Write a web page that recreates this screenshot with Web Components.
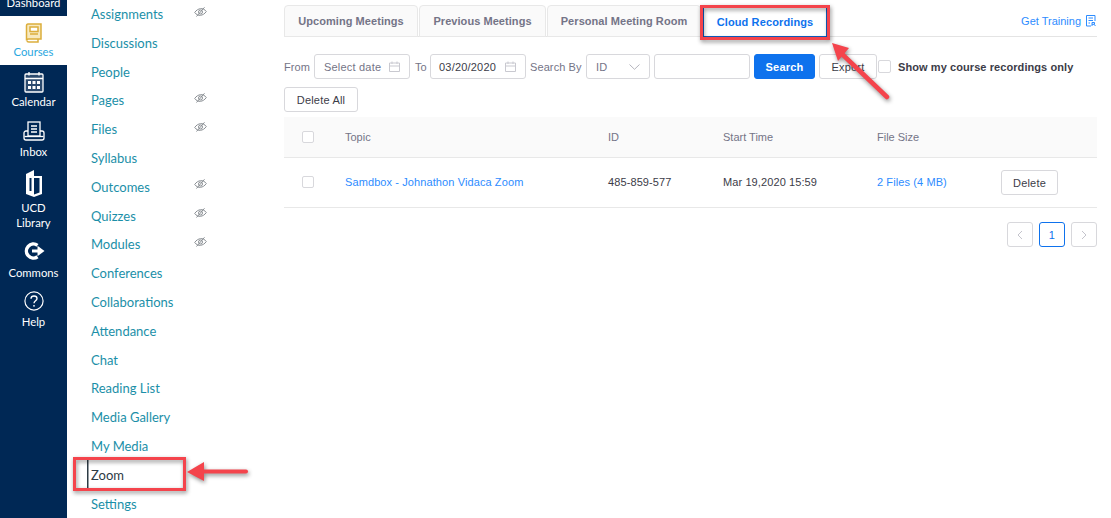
<!DOCTYPE html>
<html>
<head>
<meta charset="utf-8">
<style>
  html, body { margin: 0; height: 518px; overflow: hidden; background: #fff; }
  body { font-family: "Liberation Sans", Arial, sans-serif; }
  #page { display: grid; grid-template-columns: 67px 217px 813px; height: 518px; position: relative; overflow: hidden; }
</style>
</head>
<body>
<template id="eye">
  <svg width="13" height="12" viewBox="0 0 13 12" fill="none" stroke="#8a8f94" stroke-width="1"><path d="M.7 6.500C2.400 4 4.300 3 6.500 2.700S10.600 3.300 12.300 5.500C10.600 8 8.700 9 6.500 9.300S2.400 8.700.7 6.500Z"/><circle cx="6.500" cy="6" r="2"/><path d="M2.500 10.500 10.500 1.300"/></svg>
</template>

<div id="page">
  <rail-nav>
    <rail-item clip>Dashboard</rail-item>
    <rail-item active icon="courses" pad="7" gap="0.500" h="49">Courses</rail-item>
    <rail-item icon="calendar" pad="6" gap="0.500" h="51">Calendar</rail-item>
    <rail-item icon="inbox" pad="5" gap="2.500" h="49">Inbox</rail-item>
    <rail-item icon="library" pad="5" gap="1.500" h="71">UCD<br>Library</rail-item>
    <rail-item icon="commons" pad="5" gap="3.500" h="49">Commons</rail-item>
    <rail-item icon="help" pad="6" gap="2.500" h="49">Help</rail-item>
  </rail-nav>

  <course-nav>
    <course-link hidden-eye>Assignments</course-link>
    <course-link>Discussions</course-link>
    <course-link>People</course-link>
    <course-link hidden-eye>Pages</course-link>
    <course-link hidden-eye>Files</course-link>
    <course-link>Syllabus</course-link>
    <course-link hidden-eye>Outcomes</course-link>
    <course-link hidden-eye>Quizzes</course-link>
    <course-link hidden-eye>Modules</course-link>
    <course-link>Conferences</course-link>
    <course-link>Collaborations</course-link>
    <course-link>Attendance</course-link>
    <course-link>Chat</course-link>
    <course-link>Reading List</course-link>
    <course-link>Media Gallery</course-link>
    <course-link>My Media</course-link>
    <course-link active>Zoom</course-link>
    <course-link>Settings</course-link>
  </course-nav>

  <zoom-panel></zoom-panel>

  <callout-marks></callout-marks>
</div>

<script>
  const RAIL_ICONS = {
    courses: '<svg width="18" height="20" viewBox="0 0 18 20" fill="none" stroke="#dcae3c" stroke-width="1.500"><path d="M3 1h13v15H3.500C2 16 1.500 17 1.500 17.500V3C1.500 1.800 2 1 3 1Z" fill="#f7e9bf"/><rect x="5" y="4" width="8" height="4.500" fill="#fff"/><path d="M5 11h8"/><path d="M2 17.500c0 1 .8 1.500 1.800 1.500H13v-3"/></svg>',
    calendar: '<svg width="20" height="22" viewBox="0 0 20 22" fill="none" stroke="#fff" stroke-width="1.300"><rect x="1" y="3" width="18" height="18" rx="1" fill="#2b4a6e"/><path d="M1 7.500h18M5 1v3.500M15 1v3.500"/><g fill="#fff" stroke="none"><rect x="4" y="10" width="3" height="3"/><rect x="8.500" y="10" width="3" height="3"/><rect x="13" y="10" width="3" height="3"/><rect x="4" y="15" width="3" height="3"/><rect x="8.500" y="15" width="3" height="3"/><rect x="13" y="15" width="3" height="3"/></g></svg>',
    inbox: '<svg width="22" height="20" viewBox="0 0 22 20" fill="none" stroke="#fff" stroke-width="1.300"><rect x="5" y="1" width="12" height="14"/><path d="M8 5h6M8 8h6M8 11h6" stroke-width="1.500"/><path d="M5 10H3C1.800 10 1 11 1 12v5c0 1 .8 2 2 2h16c1.200 0 2-1 2-2v-5c0-1-.8-2-2-2h-2"/><path d="M1.500 15.500h19"/></svg>',
    library: '<svg width="18" height="28" viewBox="0 0 18 28" fill="#fff"><path d="M1 4 9 0v27L1 24Z"/><path d="M4.500 8h2v13h-2Z" fill="#002855"/><path d="M9 6h8v18l-8 3v-2.500l5.500-2V8H9Z"/></svg>',
    commons: '<svg width="22" height="20" viewBox="0 0 22 20" fill="none" stroke="#fff" stroke-width="3.500"><path d="M14.500 4.300A7 7 0 1 0 14.500 15.700"/><path d="M9 10h7" stroke-width="3"/><path d="M14.500 4.800 21.500 10 14.500 15.200Z" fill="#fff" stroke="none"/></svg>',
    help: '<svg width="20" height="20" viewBox="0 0 22 22" fill="none" stroke="#fff" stroke-width="1.300"><circle cx="11" cy="11" r="10"/><path d="M7.700 8.500C7.700 6.500 9.200 5.500 11 5.500s3.300 1 3.300 2.800c0 2.400-3.300 2.500-3.300 5.200" stroke-width="1.500"/><circle cx="11" cy="16.300" r="1" fill="#fff" stroke="none"/></svg>'
  };

  class RailNav extends HTMLElement {
    constructor() {
      super();
      this.attachShadow({ mode: 'open' }).innerHTML = `
        <style>
          :host { display: block; background: #002855; height: 518px; overflow: hidden; }
        </style>
        <slot></slot>`;
    }
  }
  customElements.define('rail-nav', RailNav);

  class RailItem extends HTMLElement {
    constructor() {
      super();
      const icon = RAIL_ICONS[this.getAttribute('icon')] || '';
      const pad = this.getAttribute('pad') || 0;
      const gap = this.getAttribute('gap') || 0;
      const h = this.getAttribute('h');
      this.attachShadow({ mode: 'open' }).innerHTML = `
        <style>
          :host {
            display: flex; flex-direction: column; align-items: center; box-sizing: border-box;
            font: 11.300px/15px Lato, sans-serif; color: #fff; text-align: center;
          }
          :host([clip]) { justify-content: flex-start; margin-top: -5px; height: 21px; }
          :host([active]) { background: #fff; color: #2aa7e0; }
          svg { display: block; flex: none; }
        </style>
        ${icon}
        <div class="lb"><slot></slot></div>`;
      if (h) this.style.height = h + 'px';
      this.style.paddingTop = pad + 'px';
      this.shadowRoot.querySelector('.lb').style.marginTop = gap + 'px';
    }
  }
  customElements.define('rail-item', RailItem);

  class CourseNav extends HTMLElement {
    constructor() {
      super();
      this.attachShadow({ mode: 'open' }).innerHTML = `
        <style>
          :host { display: block; padding-left: 20px; margin-top: -0.3px; }
        </style>
        <slot></slot>`;
    }
  }
  customElements.define('course-nav', CourseNav);

  class CourseLink extends HTMLElement {
    constructor() {
      super();
      this.attachShadow({ mode: 'open' }).innerHTML = `
        <style>
          :host {
            display: flex; align-items: center; height: 28.8px; width: 116px; padding-left: 4px;
            font: 13px Lato, sans-serif; color: #1b8fa8;
          }
          :host([active]) { color: #2d3b45; box-shadow: inset 1.500px 0 0 #2d3b45; }
          .eye { margin-left: auto; margin-top: -7px; height: 12px; }
        </style>
        <slot></slot>
        <span class="eye"></span>`;
      if (this.hasAttribute('hidden-eye')) {
        this.shadowRoot.querySelector('.eye').append(document.getElementById('eye').content.cloneNode(true));
      }
    }
  }
  customElements.define('course-link', CourseLink);

  class ZoomTab extends HTMLElement {
    constructor() {
      super();
      this.attachShadow({ mode: 'open' }).innerHTML = `
        <style>
          :host {
            display: flex; align-items: center; justify-content: center; box-sizing: border-box; height: 32px;
            background: #fafafa; border: 1px solid #e8e8e8; border-radius: 4px 4px 0 0;
            font: bold 11px "Liberation Sans", sans-serif; letter-spacing: .06px; color: #747487;
          }
          :host([active]) { background: #fff; color: #0e72ed; letter-spacing: .12px; border: 1.500px solid #0e5fc4; border-top-color: #fff; border-radius: 0; height: 31px; margin-top: 1px; }
        </style>
        <slot></slot>`;
    }
  }
  customElements.define('zoom-tab', ZoomTab);

  class ZoomBtn extends HTMLElement {
    constructor() {
      super();
      this.attachShadow({ mode: 'open' }).innerHTML = `
        <style>
          :host {
            display: inline-flex; align-items: center; justify-content: center; box-sizing: border-box; height: 25px;
            border: 1px solid #d8d8dc; border-radius: 3px; background: #fff; color: #3c3c48;
            font: 11px "Liberation Sans", sans-serif; letter-spacing: .2px;
          }
          :host([primary]) { background: #0e72ed; border-color: #0e72ed; color: #fff; font-weight: bold; }
          :host([page]) { height: 25px; width: 26px; color: #c4c4cc; }
          :host([current]) { border-color: #0e72ed; color: #0e72ed; }
        </style>
        <slot></slot>`;
    }
  }
  customElements.define('zoom-btn', ZoomBtn);

  class ZoomField extends HTMLElement {
    constructor() {
      super();
      this.attachShadow({ mode: 'open' }).innerHTML = `
        <style>
          :host {
            display: flex; align-items: center; justify-content: space-between; box-sizing: border-box; height: 25px;
            padding: 0 9px 0 8px; border: 1px solid #d8d8dc; border-radius: 3px; background: #fff; color: #3c3c48;
            font: 11px "Liberation Sans", sans-serif; letter-spacing: .2px;
          }
          :host([muted]) { color: #747487; padding-left: 9px; }
        </style>
        <slot></slot><slot name="icon"></slot>`;
    }
  }
  customElements.define('zoom-field', ZoomField);

  class ZoomPanel extends HTMLElement {
    constructor() {
      super();
      const cal = `<svg slot="icon" width="11" height="11" viewBox="0 0 11 11" fill="none" stroke="#c9c9d0"><path d="M.5 2h10v8.500H.5ZM.5 5h10M3 .5v2.500M8 .5v2.500"/></svg>`;
      this.attachShadow({ mode: 'open' }).innerHTML = `
        <style>
          :host { display: block; font: 11px "Liberation Sans", sans-serif; color: #747487; padding-top: 5px; }
          svg { display: block; }
          .tabs { display: flex; gap: 1px; border-bottom: 1px solid #e4e4e4; height: 31px; }
          .training { margin-left: auto; align-self: center; display: flex; gap: 5px; align-items: center; color: #2d8cff; padding-right: 1px; margin-top: 1px; }
          .filters { display: flex; align-items: center; margin-top: 17px; height: 25px; letter-spacing: .1px; }
          .all { margin-top: 8px; }
          .row { display: grid; grid-template-columns: 61px 263px 115px 154px 124px 96px; align-items: center; border-bottom: 1px solid #e8e8e8; }
          .head { background: #fafafa; height: 40px; margin-top: 5px; }
          .body { height: 49px; color: #3c3c48; letter-spacing: .1px; }
          .body > span:not(:last-child) { margin-bottom: 2px; }
          .box { box-sizing: border-box; width: 12px; height: 12px; border: 1px solid #d8d8dc; border-radius: 2px; background: #fff; margin-left: 18px; }
          .link { color: #2d8cff; }
          .pager { display: flex; justify-content: flex-end; gap: 6px; margin-top: 14px; }
          .cb { box-sizing: border-box; width: 13px; height: 13px; border: 1px solid #d8d8dc; border-radius: 2px; }
          .only { font-weight: bold; color: #3c3c48; letter-spacing: .08px; margin-left: 7px; white-space: nowrap; }
        </style>
        <div class="tabs">
          <zoom-tab style="width:134px">Upcoming Meetings</zoom-tab>
          <zoom-tab style="width:127px">Previous Meetings</zoom-tab>
          <zoom-tab style="width:154px">Personal Meeting Room</zoom-tab>
          <zoom-tab active style="width:124px;margin-left:1px">Cloud Recordings</zoom-tab>
          <div class="training">Get Training
            <svg width="10" height="12" viewBox="0 0 10 12" fill="none" stroke="#2d8cff"><path d="M9 6V.5H.5v10.500H5M2.500 3h4.500M2.500 5.500h4.500M2.500 8H4M6 11V7.500h2.500v1.800H6M8 9.300 9.500 11"/></svg>
          </div>
        </div>
        <div class="filters">
          <span style="width:30px">From</span>
          <zoom-field muted style="width:96px">Select date${cal}</zoom-field>
          <span style="padding-left:5px;box-sizing:border-box;width:20px">To</span>
          <zoom-field style="width:96px">03/20/2020${cal}</zoom-field>
          <span style="margin-left:4px;width:56px">Search By</span>
          <zoom-field muted style="width:64px">ID
            <svg slot="icon" width="11" height="6" viewBox="0 0 11 6" fill="none" stroke="#b5b5bd"><path d="M.5.500 5.500 5.300 10.500.500"/></svg>
          </zoom-field>
          <zoom-field style="width:96px;margin-left:4px"></zoom-field>
          <zoom-btn primary style="width:61px;margin-left:4px">Search</zoom-btn>
          <zoom-btn style="width:58px;margin-left:4px">Export</zoom-btn>
          <span class="cb" style="margin-left:1px"></span>
          <span class="only">Show my course recordings only</span>
        </div>
        <zoom-btn class="all" style="width:74px">Delete All</zoom-btn>
        <div class="row head">
          <span class="box"></span><span>Topic</span><span>ID</span><span>Start Time</span><span>File Size</span><span></span>
        </div>
        <div class="row body">
          <span class="box"></span>
          <span class="link">Samdbox - Johnathon Vidaca Zoom</span>
          <span>485-859-577</span>
          <span>Mar 19,2020 15:59</span>
          <span class="link">2 Files (4 MB)</span>
          <span><zoom-btn style="width:57px">Delete</zoom-btn></span>
        </div>
        <div class="pager">
          <zoom-btn page><svg width="6" height="10" viewBox="0 0 6 10" fill="none" stroke="#c4c4cc"><path d="M5 1 1 5l4 4"/></svg></zoom-btn>
          <zoom-btn page current>1</zoom-btn>
          <zoom-btn page><svg width="6" height="10" viewBox="0 0 6 10" fill="none" stroke="#c4c4cc"><path d="m1 1 4 4-4 4"/></svg></zoom-btn>
        </div>`;
    }
  }
  customElements.define('zoom-panel', ZoomPanel);

  // red boxes and arrows drawn on the screenshot sit over everything else
  class CalloutMarks extends HTMLElement {
    constructor() {
      super();
      this.attachShadow({ mode: 'open' }).innerHTML = `
        <style>
          :host { position: absolute; inset: 0; pointer-events: none; }
          svg { position: absolute; left: 0; top: 0; filter: drop-shadow(1px 2px 2px rgba(0,0,0,.45)); }
        </style>
        <svg width="1111" height="518" fill="none" stroke="#f4444c">
          <rect x="74.500" y="458.500" width="110" height="31" stroke-width="3"/>
          <rect x="701.500" y="6.500" width="127" height="32" stroke-width="3"/>
          <path d="M246 471.500H200" stroke-width="4" stroke-linecap="round"/>
          <path d="M187 472 204 462V481Z" fill="#f4444c" stroke="none"/>
          <path d="M887 97 842 54" stroke-width="4.500" stroke-linecap="round"/>
          <path d="M832 43 849 48 838 61Z" fill="#f4444c" stroke="none"/>
        </svg>`;
    }
  }
  customElements.define('callout-marks', CalloutMarks);
</script>
</body>
</html>
